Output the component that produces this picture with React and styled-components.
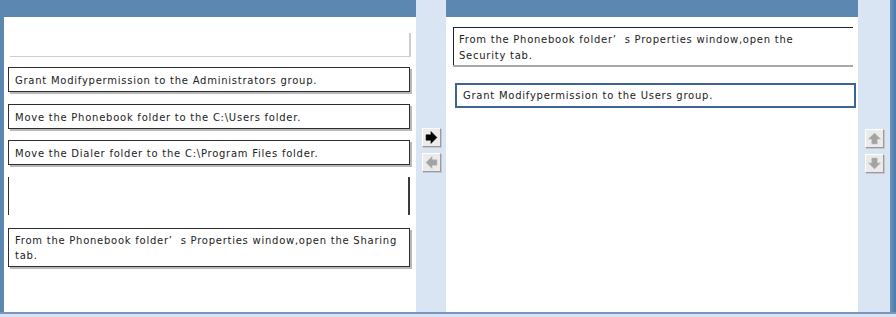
import React from "react";
import styled, { createGlobalStyle } from "styled-components";

const Global = createGlobalStyle`
  html, body { margin: 0; padding: 0; overflow: hidden; background: #d9e5f3; }
  * { box-sizing: border-box; }
`;

const Frame = styled.div`
  width: 896px;
  height: 317px;
  display: flex;
  flex-direction: column;
  font-family: "DejaVu Sans", Verdana, sans-serif;
  font-size: 10px;
  letter-spacing: 0.75px;
  color: #222;
`;

const Main = styled.div`
  display: flex;
  height: 312px;
`;

const BottomBar = styled.div`
  flex: 1;
  border-top: 2px solid #7b96b8;
  background: #d9e5f3;
`;

const Panel = styled.div`
  width: ${(p) => p.$w}px;
  background: #5b87b1;
  padding-top: 17px;
  padding-left: ${(p) => p.$padLeft || 0}px;
  display: flex;
`;

const Sheet = styled.div`
  flex: 1;
  background: #ffffff;
  display: flex;
  flex-direction: column;
  padding: ${(p) => p.$pad};
`;

const Column = styled.div`
  width: ${(p) => p.$w}px;
  background: #d9e5f3;
  display: flex;
  flex-direction: column;
  align-items: center;
  padding-top: ${(p) => p.$top}px;
  gap: 6px;
`;

const EdgeStrip = styled.div`
  width: 6px;
  background: linear-gradient(90deg, #6d94bd 0, #4b78a8 100%);
`;

const Card = styled.div`
  margin-top: ${(p) => p.$mt || 0}px;
  margin-left: ${(p) => p.$ml || 0}px;
  width: ${(p) => p.$w}px;
  min-height: ${(p) => p.$h}px;
  background: #fff;
  border: 1px solid #2e2e2e;
  box-shadow: 2px 2px 0 #b9b9b9;
  padding: 4px 6px 3px 6px;
  line-height: 15px;
  display: flex;
  align-items: center;
  white-space: nowrap;
`;

const EmptySlotTop = styled.div`
  margin-top: 16px;
  margin-left: 6px;
  width: 401px;
  height: 24px;
  border-right: 2px solid #cfcfcf;
  border-bottom: 1px solid #c9d0d9;
`;

const EmptySlotOpen = styled.div`
  margin-top: 12px;
  margin-left: 4px;
  width: 402px;
  height: 38px;
  border-left: 1px solid #2e2e2e;
  border-right: 2px solid #3a3a3a;
`;

const TopOpenCard = styled.div`
  margin-left: 7px;
  width: 400px;
  height: 38px;
  border-top: 1px solid #222;
  border-left: 1px solid #222;
  box-shadow: 0 2px 0 #a9a9a9;
  padding: 4px 5px;
  line-height: 16px;
  white-space: nowrap;
`;

const SelectedCard = styled.div`
  margin-top: 18px;
  margin-left: 9px;
  width: 401px;
  height: 25px;
  border: 2px solid #3e6592;
  padding: 0 6px;
  display: flex;
  align-items: center;
  white-space: nowrap;
`;

const ArrowButton = styled.button`
  width: 19px;
  height: 19px;
  padding: 0;
  margin: 0;
  background: #ebebeb;
  border: 1px solid;
  border-color: #ffffff #9a9a9a #9a9a9a #ffffff;
  box-shadow: 1px 1px 0 #c3c8cf;
  display: flex;
  align-items: center;
  justify-content: center;
  cursor: pointer;
`;

const rotations = { right: 0, down: 90, left: 180, up: 270 };

function Arrow({ dir, active }) {
  return (
    <svg width="13" height="13" viewBox="0 0 12 12" style={{ transform: `rotate(${rotations[dir]}deg)` }}>
      <polygon
        points="1,3.5 5.5,3.5 5.5,0.5 11,6 5.5,11.5 5.5,8.5 1,8.5"
        fill={active ? "#000" : "#a3a3a3"}
        stroke={active ? "#000" : "#b5b5b5"}
        strokeWidth="0.5"
      />
    </svg>
  );
}

export default function App() {
  return (
    <Frame>
      <Global />
      <Main>
        <Panel $w={416} $padLeft={4}>
          <Sheet $pad="0 0 0 0">
            <EmptySlotTop />
            <Card $mt={10} $ml={4} $w={402} $h={25}>
              Grant Modifypermission to the Administrators group.
            </Card>
            <Card $mt={12} $ml={4} $w={402} $h={25}>
              Move the Phonebook folder to the C:\Users folder.
            </Card>
            <Card $mt={11} $ml={4} $w={402} $h={25}>
              Move the Dialer folder to the C:\Program Files folder.
            </Card>
            <EmptySlotOpen />
            <Card $mt={13} $ml={4} $w={402} $h={39}>
              <span>
                From the Phonebook folder’&nbsp; s Properties window,open the Sharing
                <br />
                tab.
              </span>
            </Card>
          </Sheet>
        </Panel>
        <Column $w={30} $top={128}>
          <ArrowButton aria-label="Add">
            <Arrow dir="right" active />
          </ArrowButton>
          <ArrowButton aria-label="Remove">
            <Arrow dir="left" />
          </ArrowButton>
        </Column>
        <Panel $w={412}>
          <Sheet $pad="10px 0 0 0">
            <TopOpenCard>
              From the Phonebook folder’&nbsp; s Properties window,open the
              <br />
              Security tab.
            </TopOpenCard>
            <SelectedCard>Grant Modifypermission to the Users group.</SelectedCard>
          </Sheet>
        </Panel>
        <Column $w={32} $top={129}>
          <ArrowButton aria-label="Move up">
            <Arrow dir="up" />
          </ArrowButton>
          <ArrowButton aria-label="Move down">
            <Arrow dir="down" />
          </ArrowButton>
        </Column>
        <EdgeStrip />
      </Main>
      <BottomBar />
    </Frame>
  );
}
